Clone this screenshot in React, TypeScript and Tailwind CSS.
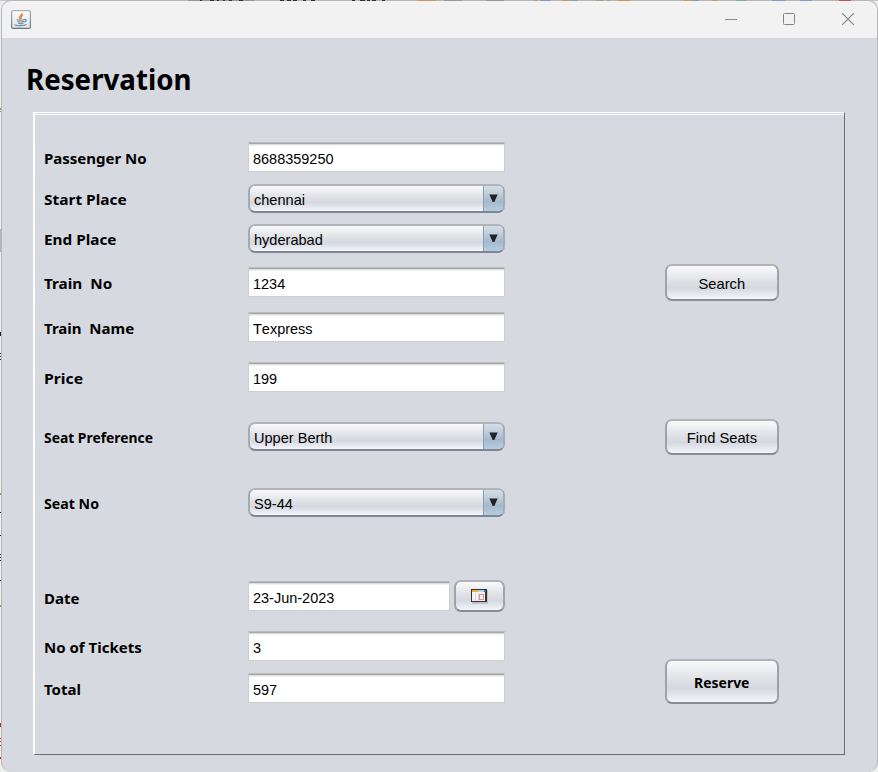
import type { ReactNode } from 'react';

const labelFont = "font-['Noto_Sans','Open_Sans',sans-serif]";
const fieldFont = "font-['Liberation_Sans',Arial,sans-serif] [font-kerning:none]";

function Label({ children, className = '' }: { children: ReactNode; className?: string }) {
  return (
    <div className="w-[204px] shrink-0">
      <span className={`block w-max whitespace-pre text-[15px] leading-5 font-bold text-black ${labelFont} ${className}`}>
        {children}
      </span>
    </div>
  );
}

function Row({ label, className, labelClass = 'pt-px', children }: { label: string; className: string; labelClass?: string; children: ReactNode }) {
  return (
    <div className={`flex items-center ${className}`}>
      <Label className={labelClass}>{label}</Label>
      {children}
    </div>
  );
}

function TextField({ value, className = 'w-[257px]' }: { value: string; className?: string }) {
  return (
    <div
      className={`flex h-[30px] items-center border border-[#cdced0] border-t-[#b9bbbf] bg-white px-1 pt-[4px] text-[15px] leading-5 text-black shadow-[inset_0_1px_0_#a6a7a9,inset_0_2px_0_#dededf,inset_0_3px_0_#f3f3f3] ${fieldFont} ${className}`}
    >
      <span className="origin-left scale-x-[.965]">{value}</span>
    </div>
  );
}

const metal = 'bg-[linear-gradient(180deg,#fbfbfc_0%,#e9eaee_28%,#dddfe4_50%,#d5d8df_66%,#e2e5ec_82%,#f3f6fc_100%)]';

function Combo({ value }: { value: string }) {
  return (
    <div className={`flex h-[29px] w-[257px] overflow-hidden rounded-[7px] border-2 border-[#a5a9b1] border-t-[#b1b4ba] border-b-[#7c8591] ${metal}`}>
      <div className={`flex-1 pt-[4px] pl-1 text-[15px] leading-5 text-black ${fieldFont}`}>
        <span className="inline-block origin-left scale-x-[.97]">{value}</span>
      </div>
      <div className="flex w-[20px] justify-center border-l border-[#87a0b5] bg-[linear-gradient(180deg,#d3dee8_0%,#b8c9d8_40%,#a3b9cc_62%,#b6cde1_100%)] pt-[8px]">
        <svg width="9" height="9" viewBox="0 0 9 9">
          <path d="M0.3 0.5H8.7L5.3 8H3.7Z" fill="#202225" />
        </svg>
      </div>
    </div>
  );
}

function Button({ children, className }: { children: ReactNode; className: string }) {
  return (
    <button
      className={`flex items-center justify-center rounded-[7px] border-2 border-[#a0a2a6] border-t-[#b0b2b6] border-b-[#898b8f] text-[15px] leading-5 text-black ${metal} ${className}`}
    >
      {children}
    </button>
  );
}

function JavaIcon() {
  return (
    <svg width="20" height="19" viewBox="0 0 20 19" fill="none">
      <defs>
        <linearGradient id="tile" x1="0" y1="0" x2="0" y2="1">
          <stop offset="0" stopColor="#fdfdfd" />
          <stop offset="1" stopColor="#dfe2e6" />
        </linearGradient>
        <linearGradient id="edge" x1="0" y1="0" x2="0" y2="1">
          <stop offset="0" stopColor="#a3b3bf" />
          <stop offset="1" stopColor="#5f7688" />
        </linearGradient>
      </defs>
      <rect x="0.6" y="0.6" width="18.8" height="17.8" rx="1.5" fill="url(#tile)" stroke="url(#edge)" strokeWidth="1.2" />
      <path d="M10.8 2.8C12 5 7.6 5.8 8.4 7.6L9.5 9.2M12 5.2C10 6.2 9.3 7.2 10.7 8.8" stroke="#e88b3c" strokeWidth="1.5" />
      <path d="M5.5 9.5C7 10.3 12 10.3 13.5 9.4M6.2 11.3C8 12.1 11 12.1 13 11.2M7 13.1C8.8 13.8 11 13.8 12.6 13M13.3 9.5C16 8.8 15.6 11.6 13.2 12M4 14.5C4.5 16 13 16 15.5 14.4" stroke="#7893a8" strokeWidth="1.2" />
    </svg>
  );
}

function CalendarIcon() {
  return (
    <svg width="17" height="15" viewBox="0 0 17 15" shapeRendering="crispEdges">
      <path d="M1 1H17V15H1Z" fill="#bfc1c5" />
      <path d="M0 0H16V13H0Z" fill="#35312e" />
      <path d="M1 3H14V12H1Z" fill="#f5f3f3" />
      <path d="M1 1H7V3H1Z" fill="#eab13f" />
      <path d="M7 1H13V3H7Z" fill="#a9d7f5" />
      <path d="M13 1H15V3H13Z" fill="#4d6474" />
      <path d="M4 4H5V12H4Z M7 4H8V12H7Z" fill="#d9d9dc" />
      <rect x="8.5" y="5.5" width="4" height="5" fill="none" stroke="#ec8b8e" />
    </svg>
  );
}

export default function App() {
  return (
    <div className="relative h-[772px] w-[878px] overflow-hidden bg-[#eeeeef]">
      <svg className="absolute inset-0" width="878" height="772" shapeRendering="crispEdges">
        <path d="M0 0H878V1H0Z" fill="#c8c6c6" />
        <path d="M0 229H2V252H0Z" fill="#b4b4b6" />
        <path d="M0 111H2V112H0Z" fill="#4fa3d0" />
        <path d="M0 332H1V336H0Z M0 353H2V354H0Z M0 356H2V357H0Z M0 359H2V360H0Z M0 512H2V513H0Z M0 535H2V536H0Z M0 554H2V555H0Z M0 557H2V558H0Z M0 560H2V561H0Z M0 580H2V581H0Z" fill="#222" />
        <path d="M0 493H2V495H0Z M0 605H2V607H0Z M0 108H2V110H0Z" fill="#c18748" />
        <path d="M0 723H2V727H0Z M0 738H2V739H0Z M0 741H2V742H0Z M0 745H2V746H0Z M0 757H2V759H0Z" fill="#c8253d" />
      </svg>

      <div className="relative ml-px flex h-full flex-col rounded-[10px] border-t border-r border-l border-[#b6b6b8] bg-[#d6d9e0]">
        <svg className="absolute -top-px left-0 z-10" width="876" height="1" shapeRendering="crispEdges">
          <path d="M12 0H864V1H12Z" fill="#b6b4b4" />
          <path d="M186 0H253V1H186Z M442 0H460V1H442Z M484 0H502V1H484Z" fill="#999799" />
          <path d="M198 0H200V1H198Z M208 0H212V1H208Z M215 0H217V1H215Z M221 0H223V1H221Z M227 0H230V1H227Z M237 0H241V1H237Z M278 0H282V1H278Z M285 0H289V1H285Z M291 0H295V1H291Z M301 0H304V1H301Z M309 0H313V1H309Z M350 0H353V1H350Z M358 0H363V1H358Z M365 0H368V1H365Z M370 0H374V1H370Z M380 0H383V1H380Z" fill="#333" />
          <path d="M415 0H434V1H415Z M533 0H536V1H533Z M560 0H568V1H560Z M594 0H598V1H594Z M605 0H607V1H605Z M615 0H629V1H615Z M682 0H690V1H682Z M710 0H715V1H710Z" fill="#c99a55" />
          <path d="M538 0H549V1H538Z M568 0H575V1H568Z M598 0H601V1H598Z M770 0H783V1H770Z M798 0H810V1H798Z" fill="#819cc7" />
          <path d="M690 0H697V1H690Z M734 0H744V1H734Z" fill="#75a7ae" />
          <path d="M837 0H849V1H837Z" fill="#bd5558" />
        </svg>
        <header className="flex h-[37px] shrink-0 items-center justify-between rounded-t-[9px] bg-[#f2f2f2] pr-[23px] pb-px pl-[9px]">
          <JavaIcon />
          <div className="flex items-center gap-[46px]">
            <svg width="12" height="13" viewBox="0 0 12 13" shapeRendering="crispEdges">
              <path d="M0 6.5H12" stroke="#8c8c8c" />
            </svg>
            <svg className="mr-px" width="12" height="12" viewBox="0 0 12 12">
              <rect x="0.5" y="0.5" width="11" height="11" rx="1" fill="none" stroke="#858585" />
            </svg>
            <svg width="12" height="12" viewBox="0 0 12 12">
              <path d="M0 0L12 12M12 0L0 12" stroke="#858585" strokeWidth="1.1" />
            </svg>
          </div>
        </header>

        <h1 className="mt-[21px] ml-[24px] h-[40px] w-max origin-left scale-x-[.955] font-['Noto_Sans','Open_Sans',sans-serif] text-[29px] leading-10 font-bold text-black">
          Reservation
        </h1>

        <main className="mt-[13px] ml-[31px] h-[643px] w-[812px] border-t border-r border-b border-l-2 border-t-white border-r-[#6b6d70] border-b-[#6b6d70] border-l-white">
          <div className="mt-px flex border-t border-white">
            <div className="ml-[9px] w-[621px] pt-[27px]">
              <Row label="Passenger No" className="h-[30px]" labelClass="pt-[2px]"><TextField value="8688359250" /></Row>
              <Row label="Start Place" className="mt-[12px] h-[29px]" labelClass="origin-left scale-x-[1.03]"><Combo value="chennai" /></Row>
              <Row label="End Place" className="mt-[11px] h-[29px]" labelClass="origin-left scale-x-[1.02]"><Combo value="hyderabad" /></Row>
              <Row label="Train  No" className="mt-[14px] h-[30px]" labelClass="origin-left scale-x-[1.02] pt-[2px]"><TextField value="1234" /></Row>
              <Row label="Train  Name" className="mt-[15px] h-[30px]" labelClass="pt-[2px]"><TextField value="Texpress" /></Row>
              <Row label="Price" className="mt-[20px] h-[30px]" labelClass="origin-left scale-x-[1.05] pt-[2px]"><TextField value="199" /></Row>
              <Row label="Seat Preference" className="mt-[30px] h-[29px]" labelClass="origin-left scale-x-[.925]"><Combo value="Upper Berth" /></Row>
              <Row label="Seat No" className="mt-[37px] h-[29px]" labelClass="origin-left scale-x-[.945]"><Combo value="S9-44" /></Row>
              <Row label="Date" className="mt-[64px] h-[30px]" labelClass="pt-[3px]">
                <TextField value="23-Jun-2023" className="w-[202px]" />
                <Button className="ml-[4px] h-[32px] w-[51px] pt-px"><CalendarIcon /></Button>
              </Row>
              <Row label="No of Tickets" className="mt-[20px] h-[30px]" labelClass="pt-[2px]"><TextField value="3" /></Row>
              <Row label="Total" className="mt-[12px] h-[30px]"><TextField value="597" /></Row>
            </div>
            <div className="flex flex-col pt-[149px]">
              <Button className={`h-[37px] w-[114px] pt-[2px] ${fieldFont}`}><span className="scale-x-[.98]">Search</span></Button>
              <Button className={`mt-[118px] h-[36px] w-[114px] pt-[2px] ${fieldFont}`}><span className="scale-x-[.98]">Find Seats</span></Button>
              <Button className={`mt-[204px] h-[45px] w-[114px] font-bold ${labelFont}`}>
                <span className="scale-x-[.93]">Reserve</span>
              </Button>
            </div>
          </div>
        </main>
      </div>
    </div>
  );
}
